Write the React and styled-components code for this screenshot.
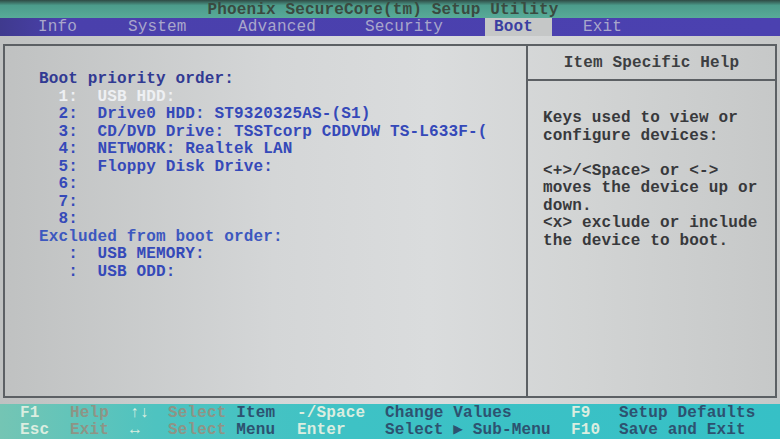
import styled, { createGlobalStyle } from "styled-components"

const ROW = 17.56

const bootItems = [
  { num: "1:", label: "USB HDD:", selected: true },
  { num: "2:", label: "Drive0 HDD: ST9320325AS-(S1)" },
  { num: "3:", label: "CD/DVD Drive: TSSTcorp CDDVDW TS-L633F-(" },
  { num: "4:", label: "NETWORK: Realtek LAN" },
  { num: "5:", label: "Floppy Disk Drive:" },
  { num: "6:", label: "" },
  { num: "7:", label: "" },
  { num: "8:", label: "" },
]

const excluded = ["USB MEMORY:", "USB ODD:"]

const tabs = [
  { name: "Info", w: 90 },
  { name: "System", w: 110 },
  { name: "Advanced", w: 127 },
  { name: "Security", w: 129 },
  { name: "Boot", w: 67, active: true },
  { name: "Exit", w: 100 },
]

const helpLines = [
  "Keys used to view or",
  "configure devices:",
  "",
  "<+>/<Space> or <->",
  "moves the device up or",
  "down.",
  "<x> exclude or include",
  "the device to boot.",
]

const footer = [
  [
    ["F1", "key"], ["Help", "dim"], ["↑↓", "key"], ["Select Item", "mix"],
    ["-/Space", "key"], ["Change Values", "desc"], ["F9", "key"], ["Setup Defaults", "desc"],
  ],
  [
    ["Esc", "key"], ["Exit", "dim"], ["↔", "key"], ["Select Menu", "mix"],
    ["Enter", "key"], ["Select ▶ Sub-Menu", "desc"], ["F10", "key"], ["Save and Exit", "desc"],
  ],
]

// first word greyed, the rest in the description colour
function Mixed({ text }) {
  const idx = text.indexOf(" ")
  return (
    <>
      <Dim>{text.slice(0, idx)}</Dim>{text.slice(idx)}
    </>
  )
}

export default function App() {
  return (
    <>
      <GlobalStyle />
      <Screen>
        <TitleBar>Phoenix SecureCore(tm) Setup Utility</TitleBar>
        <MenuBar>
          {tabs.map((t) => (
            <Tab key={t.name} $w={t.w} $active={t.active}>{t.name}</Tab>
          ))}
        </MenuBar>
        <Main>
          <Frame>
            <LeftPane>
              <Heading>Boot priority order:</Heading>
              {bootItems.map((item) => (
                <Line key={item.num} $selected={item.selected}>
                  {"  " + item.num + "  " + item.label}
                </Line>
              ))}
              <Heading $light>Excluded from boot order:</Heading>
              {excluded.map((label) => (
                <Line key={label}>{"   :  " + label}</Line>
              ))}
            </LeftPane>
            <RightPane>
              <HelpHeader>Item Specific Help</HelpHeader>
              <HelpBody>
                {helpLines.map((l, i) => (
                  <HelpLine key={i}>{l || " "}</HelpLine>
                ))}
              </HelpBody>
            </RightPane>
          </Frame>
        </Main>
        <Footer>
          {footer.map((row, r) => (
            <FooterRow key={r}>
              {row.map(([text, kind], i) => (
                <FooterCell key={i} $kind={kind}>
                  {kind === "mix" ? <Mixed text={text} /> : text}
                </FooterCell>
              ))}
            </FooterRow>
          ))}
        </Footer>
      </Screen>
    </>
  )
}

const GlobalStyle = createGlobalStyle`
  html, body {
    margin: 0;
    padding: 0;
    background: #1e2a28;
  }
  * {
    box-sizing: border-box;
  }
`

const Screen = styled.div`
  width: 780px;
  height: 439px;
  overflow: hidden;
  display: flex;
  flex-direction: column;
  font-family: "Liberation Mono", "DejaVu Sans Mono", monospace;
  font-size: 16px;
  font-weight: 700;
  letter-spacing: 0.15px;
  white-space: pre;
`

const TitleBar = styled.div`
  height: 18px;
  line-height: 20px;
  text-align: center;
  color: #3a4a40;
  background: linear-gradient(180deg, #2f4a44 0%, #4c9c8b 30%, #58ab98 100%);
  padding-right: 14px;
`

const MenuBar = styled.div`
  height: 18px;
  display: flex;
  padding-left: 29px;
  background: linear-gradient(90deg, #3f3a8e 0%, #4a40ac 8%, #4b41b0 100%);
`

const Tab = styled.div`
  width: ${(p) => p.$w}px;
  padding-left: 9px;
  line-height: 18px;
  color: ${(p) => (p.$active ? "#3b3fa2" : "#a9a7cb")};
  background: ${(p) => (p.$active ? "#c5c7c7" : "transparent")};
  font-weight: ${(p) => (p.$active ? 700 : 400)};
  margin-right: ${(p) => (p.$active ? 22 : 0)}px;
`

const Main = styled.div`
  flex: 1;
  padding: 8px 3px 6px 3px;
  background: linear-gradient(90deg, #bfc1c1 0%, #d4d6d7 35%, #dadcdd 55%, #d2d4d4 75%, #c6c8c8 100%);
`

const Frame = styled.div`
  height: 100%;
  display: grid;
  grid-template-columns: 521px 1fr;
  border: 2px solid #5c6064;
`

const LeftPane = styled.div`
  padding: 25px 0 0 34px;
  display: flex;
  flex-direction: column;
`

const Heading = styled.div`
  height: ${ROW}px;
  line-height: ${ROW}px;
  color: ${(p) => (p.$light ? "#3d58bf" : "#313a93")};
`

const Line = styled.div`
  height: ${ROW}px;
  line-height: ${ROW}px;
  color: ${(p) => (p.$selected ? "#eef0f3" : "#3549b9")};
`

const RightPane = styled.div`
  border-left: 2px solid #5c6064;
  display: flex;
  flex-direction: column;
`

const HelpHeader = styled.div`
  height: 35px;
  line-height: 34px;
  text-align: center;
  color: #3d3f42;
  border-bottom: 2px solid #5c6064;
`

const HelpBody = styled.div`
  padding: 29px 0 0 15px;
`

const HelpLine = styled.div`
  height: ${ROW}px;
  line-height: ${ROW}px;
  color: #38393c;
`

const Footer = styled.div`
  height: 35px;
  padding-top: 1px;
  background: linear-gradient(90deg, #74c5b4 0%, #4ec3c0 20%, #3ec2c5 45%, #36c0c6 100%);
`

const FooterRow = styled.div`
  display: grid;
  grid-template-columns: 20px 50px 60px 38px 129px 88px 186px 48px 1fr;
  height: 17px;
  line-height: 17px;

  &::before {
    content: "";
  }
`

const colors = {
  key: "#dbede0",
  dim: "#8e9486",
  desc: "#2d5270",
  mix: "#2d5270",
}

const FooterCell = styled.div`
  color: ${(p) => colors[p.$kind]};
`

const Dim = styled.span`
  color: #8e9486;
`
